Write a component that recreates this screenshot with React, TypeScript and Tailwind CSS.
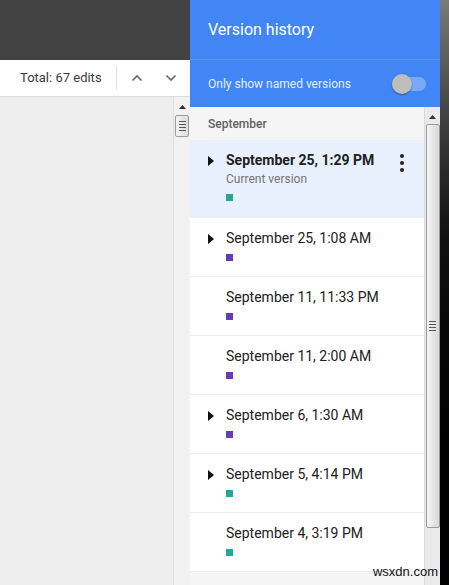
import React from "react";

type Item = { title: string; sub?: string; color: string; arrow: boolean; bold?: boolean; selected?: boolean };

const items: Item[] = [
  { title: "September 25, 1:29 PM", sub: "Current version", color: "#26a69a", arrow: true, bold: true, selected: true },
  { title: "September 25, 1:08 AM", color: "#673ab7", arrow: true },
  { title: "September 11, 11:33 PM", color: "#673ab7", arrow: false },
  { title: "September 11, 2:00 AM", color: "#673ab7", arrow: false },
  { title: "September 6, 1:30 AM", color: "#673ab7", arrow: true },
  { title: "September 5, 4:14 PM", color: "#26a69a", arrow: true },
  { title: "September 4, 3:19 PM", color: "#26a69a", arrow: false },
];

function Grip() {
  return (
    <div className="flex flex-col gap-[2px] items-center">
      <div className="w-[7px] h-[1px] bg-[#555]" />
      <div className="w-[7px] h-[1px] bg-[#555]" />
      <div className="w-[7px] h-[1px] bg-[#555]" />
      <div className="w-[7px] h-[1px] bg-[#555]" />
    </div>
  );
}

function UpArrow() {
  return (
    <svg width="7" height="4" viewBox="0 0 7 4">
      <path d="M0 4 L3.5 0 L7 4 Z" fill="#333" />
    </svg>
  );
}

export default function App() {
  return (
    <div
      className="w-[449px] h-[585px] flex overflow-hidden relative"
      style={{ fontFamily: "Roboto, 'Liberation Sans', sans-serif" }}
    >
      {/* Left document area */}
      <div className="w-[190px] h-full flex flex-col">
        <div className="h-[60px] bg-[#424242]" />
        <div className="h-[37px] bg-white border-b border-[#dcdcdc] flex items-center">
          <span className="ml-[20px] text-[13px] text-[#3a3a3a]">Total: 67 edits</span>
          <div className="ml-[14px] w-[1px] h-[24px] bg-[#e0e0e0]" />
          <svg className="ml-[14px]" width="12" height="8" viewBox="0 0 12 8">
            <path d="M1.5 6.5 L6 2 L10.5 6.5" stroke="#666" strokeWidth="1.6" fill="none" />
          </svg>
          <svg className="ml-[22px]" width="12" height="8" viewBox="0 0 12 8">
            <path d="M1.5 1.5 L6 6 L10.5 1.5" stroke="#666" strokeWidth="1.6" fill="none" />
          </svg>
        </div>
        <div className="flex-1 bg-[#eeeeee] flex justify-end">
          <div className="w-[17px] h-full bg-[#f2f2f2] border-l border-[#dedede] flex flex-col items-center">
            <div className="mt-[6px] h-[8px] flex items-center">
              <UpArrow />
            </div>
            <div className="mt-[4px] w-[14px] h-[22px] bg-gradient-to-r from-[#f4f4f4] to-[#dcdcdc] border border-[#9a9a9a] rounded-[2px] flex items-center justify-center">
              <Grip />
            </div>
          </div>
        </div>
      </div>

      {/* Version history panel */}
      <div className="w-[250px] h-full flex flex-col bg-white">
        <div className="h-[60px] bg-[#4285f4] border-b border-[#5b95f5] flex items-center px-[18px]">
          <span className="text-[16px] text-white">Version history</span>
        </div>
        <div className="h-[47px] bg-[#4285f4] flex items-center justify-between pl-[18px] pr-[14px]">
          <span className="text-[12px] text-[#e3edfd]">Only show named versions</span>
          <div className="relative w-[34px] h-[14px] rounded-full bg-[#7aaaf7]">
            <div className="absolute left-[0px] top-[-3px] w-[20px] h-[20px] rounded-full bg-[#bdbdbd] shadow-[0_1px_2px_rgba(0,0,0,0.35)]" />
          </div>
        </div>
        <div className="flex-1 flex bg-[#f5f5f5]">
          <div className="w-[234px] flex flex-col">
            <div className="h-[33px] bg-[#f5f5f5] flex items-center pl-[18px]">
              <span className="text-[12px] font-medium text-[#616161]">September</span>
            </div>
            {items.map((it, i) => (
              <div
                key={i}
                className={
                  (it.selected ? "h-[77px] bg-[#e8f0fe]" : "h-[59px] bg-white border-t border-[#eeeeee]") +
                  " flex relative"
                }
              >
                <div className="w-[36px] flex justify-start pl-[18px] pt-[16px]">
                  {it.arrow && (
                    <svg width="6" height="10" viewBox="0 0 6 10">
                      <path d="M0 0 L6 5 L0 10 Z" fill="#111" />
                    </svg>
                  )}
                </div>
                <div className="flex flex-col pt-[11px]">
                  <span className={"text-[14px] text-[#212121] leading-[18px] " + (it.bold ? "font-bold" : "")}>
                    {it.title}
                  </span>
                  {it.sub && <span className="text-[12px] text-[#757575] leading-[15px] mt-[3px]">{it.sub}</span>}
                  <div className="w-[7px] h-[7px] mt-[7px]" style={{ backgroundColor: it.color }} />
                </div>
                {it.selected && (
                  <div className="absolute right-[20px] top-[14px] flex flex-col gap-[3px]">
                    <div className="w-[4px] h-[4px] rounded-full bg-[#222]" />
                    <div className="w-[4px] h-[4px] rounded-full bg-[#222]" />
                    <div className="w-[4px] h-[4px] rounded-full bg-[#222]" />
                  </div>
                )}
              </div>
            ))}
            <div className="flex-1 bg-[#f5f5f5] border-t border-[#eeeeee]" />
          </div>
          <div className="w-[16px] h-full bg-[#eaeaea] border-l border-[#dcdcdc] flex flex-col items-center">
            <div className="mt-[6px] h-[8px] flex items-center">
              <UpArrow />
            </div>
            <div className="mt-[3px] w-[14px] h-[404px] bg-gradient-to-r from-[#f6f6f6] to-[#d8d8d8] border border-[#9a9a9a] rounded-[2px] flex items-center justify-center">
              <Grip />
            </div>
          </div>
        </div>
      </div>

      {/* dark right strip */}
      <div className="w-[9px] h-full bg-gradient-to-b from-[#7a7a7a] via-[#111] via-40% to-[#000]" />

      <span
        className="absolute right-[11px] bottom-[4px] text-[13px] text-[#111]"
        style={{ fontFamily: "'Liberation Sans', Arial, sans-serif" }}
      >
        wsxdn.com
      </span>
    </div>
  );
}
